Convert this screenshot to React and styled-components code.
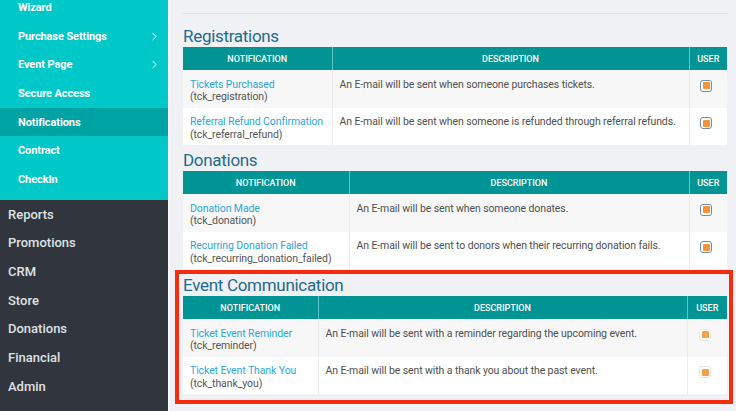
import React from "react";
import styled, { createGlobalStyle } from "styled-components";
import { ChevronRight } from "lucide-react";

const GlobalStyle = createGlobalStyle`
  html, body {
    margin: 0;
    padding: 0;
  }
  body {
    font-family: Roboto, "Liberation Sans", Arial, sans-serif;
    background: #eff1f4;
    overflow: hidden;
  }
`;

const Page = styled.div`
  display: flex;
  width: 736px;
  height: 411px;
  overflow: hidden;
`;

const Sidebar = styled.nav`
  width: 168px;
  flex-shrink: 0;
  background: #31353d;
  display: flex;
  flex-direction: column;
`;

const SubMenu = styled.div`
  background: #00c8c8;
  margin-top: -7px;
  padding-bottom: 6px;
`;

const SubItem = styled.div`
  height: 28.7px;
  display: flex;
  align-items: center;
  justify-content: space-between;
  padding: 0 7px 0 18px;
  color: #fff;
  font-size: 11px;
  font-weight: 700;
  letter-spacing: -0.1px;
  background: ${(p) => (p.$active ? "#00a3a3" : "transparent")};
`;

const MainItem = styled.div`
  height: 28.7px;
  display: flex;
  align-items: center;
  padding-left: 8px;
  color: #dfe2e6;
  font-size: 13px;
  font-weight: 500;
`;

const Main = styled.main`
  flex: 1;
  border-left: 2px solid #f8f9fb;
  padding: 13px 9px 0 13px;
  display: flex;
  flex-direction: column;
`;

const TopRule = styled.div`
  height: 1px;
  background: #dcdfe3;
  margin-right: -1px;
  margin-bottom: 11px;
`;

const Section = styled.section`
  margin-top: ${(p) => (p.$first ? "0" : "4px")};
`;

const Highlight = styled.section`
  margin: 1px -6px 0 -8px;
  border: 4px solid #f72c0e;
  padding: 0 2px 6px 4px;
`;

const Title = styled.h2`
  margin: 0;
  font-size: 17px;
  line-height: 22px;
  letter-spacing: -0.3px;
  font-weight: 400;
  color: #1f6b8c;
`;

const Table = styled.table`
  width: 100%;
  border-collapse: collapse;
  table-layout: fixed;
  font-size: 10.5px;
  letter-spacing: -0.1px;
`;

const Th = styled.th`
  height: 23px;
  padding: 0;
  background: #009494;
  color: #fff;
  font-size: 9px;
  font-weight: 500;
  letter-spacing: 0;
  text-align: center;
  text-transform: uppercase;
  & + & {
    border-left: 1px solid #5fc4c4;
  }
`;

const Row = styled.tr`
  height: 37.5px;
  background: ${(p) => (p.$alt ? "#ffffff" : "#f7f7f7")};
`;

const Td = styled.td`
  padding: ${(p) => (p.$center ? "9.5px 9px 0 5px" : "8.5px 7px 0")};
  vertical-align: top;
  line-height: 12.5px;
  color: #505050;
  text-align: ${(p) => (p.$center ? "center" : "left")};
  & + & {
    border-left: 1px solid #ececec;
  }
`;

const Link = styled.a`
  display: block;
  color: #2aa8de;
  text-decoration: none;
`;

const Code = styled.span`
  display: block;
  color: #555;
`;

const Check = styled.span`
  display: inline-flex;
  align-items: center;
  justify-content: center;
  box-sizing: border-box;
  width: 12px;
  height: 12px;
  border: 1.5px solid ${(p) => (p.$disabled ? "#e6e6e6" : "#6f8ea3")};
  border-radius: 3px;
  background: #fff;
  &::after {
    content: "";
    width: 7px;
    height: 7px;
    border-radius: 1px;
    background: ${(p) => (p.$disabled ? "#f5a04c" : "#f7943a")};
  }
`;

const subItems = [
  { label: "Wizard" },
  { label: "Purchase Settings", arrow: true },
  { label: "Event Page", arrow: true },
  { label: "Secure Access" },
  { label: "Notifications", active: true },
  { label: "Contract" },
  { label: "CheckIn" },
];

const mainItems = ["Reports", "Promotions", "CRM", "Store", "Donations", "Financial", "Admin"];

const sections = [
  {
    title: "Registrations",
    cols: [149, 38],
    rows: [
      ["Tickets Purchased", "tck_registration", "An E-mail will be sent when someone purchases tickets."],
      ["Referral Refund Confirmation", "tck_referral_refund", "An E-mail will be sent when someone is refunded through referral refunds."],
    ],
  },
  {
    title: "Donations",
    cols: [166, 38],
    rows: [
      ["Donation Made", "tck_donation", "An E-mail will be sent when someone donates."],
      ["Recurring Donation Failed", "tck_recurring_donation_failed", "An E-mail will be sent to donors when their recurring donation fails."],
    ],
  },
  {
    title: "Event Communication",
    cols: [135, 40],
    highlight: true,
    disabled: true,
    rows: [
      ["Ticket Event Reminder", "tck_reminder", "An E-mail will be sent with a reminder regarding the upcoming event."],
      ["Ticket Event Thank You", "tck_thank_you", "An E-mail will be sent with a thank you about the past event."],
    ],
  },
];

const NotificationTable = ({ section }) => (
  <>
    <Title>{section.title}</Title>
    <Table>
      <colgroup>
        <col style={{ width: section.cols[0] }} />
        <col />
        <col style={{ width: section.cols[1] }} />
      </colgroup>
      <thead>
        <tr>
          <Th>Notification</Th>
          <Th>Description</Th>
          <Th>User</Th>
        </tr>
      </thead>
      <tbody>
        {section.rows.map(([name, code, desc], i) => (
          <Row key={code} $alt={i % 2 === 1}>
            <Td>
              <Link>{name}</Link>
              <Code>({code})</Code>
            </Td>
            <Td>{desc}</Td>
            <Td $center>
              <Check $disabled={section.disabled} />
            </Td>
          </Row>
        ))}
      </tbody>
    </Table>
  </>
);

const App = () => {
  return (
    <Page>
      <GlobalStyle />
      <Sidebar>
        <SubMenu>
          {subItems.map((item) => (
            <SubItem key={item.label} $active={item.active}>
              {item.label}
              {item.arrow && <ChevronRight size={13} strokeWidth={1.75} />}
            </SubItem>
          ))}
        </SubMenu>
        {mainItems.map((label) => (
          <MainItem key={label}>{label}</MainItem>
        ))}
      </Sidebar>
      <Main>
        <TopRule />
        {sections.map((s, i) =>
          s.highlight ? (
            <Highlight key={s.title}>
              <NotificationTable section={s} />
            </Highlight>
          ) : (
            <Section key={s.title} $first={i === 0}>
              <NotificationTable section={s} />
            </Section>
          )
        )}
      </Main>
    </Page>
  );
};

export default App;
